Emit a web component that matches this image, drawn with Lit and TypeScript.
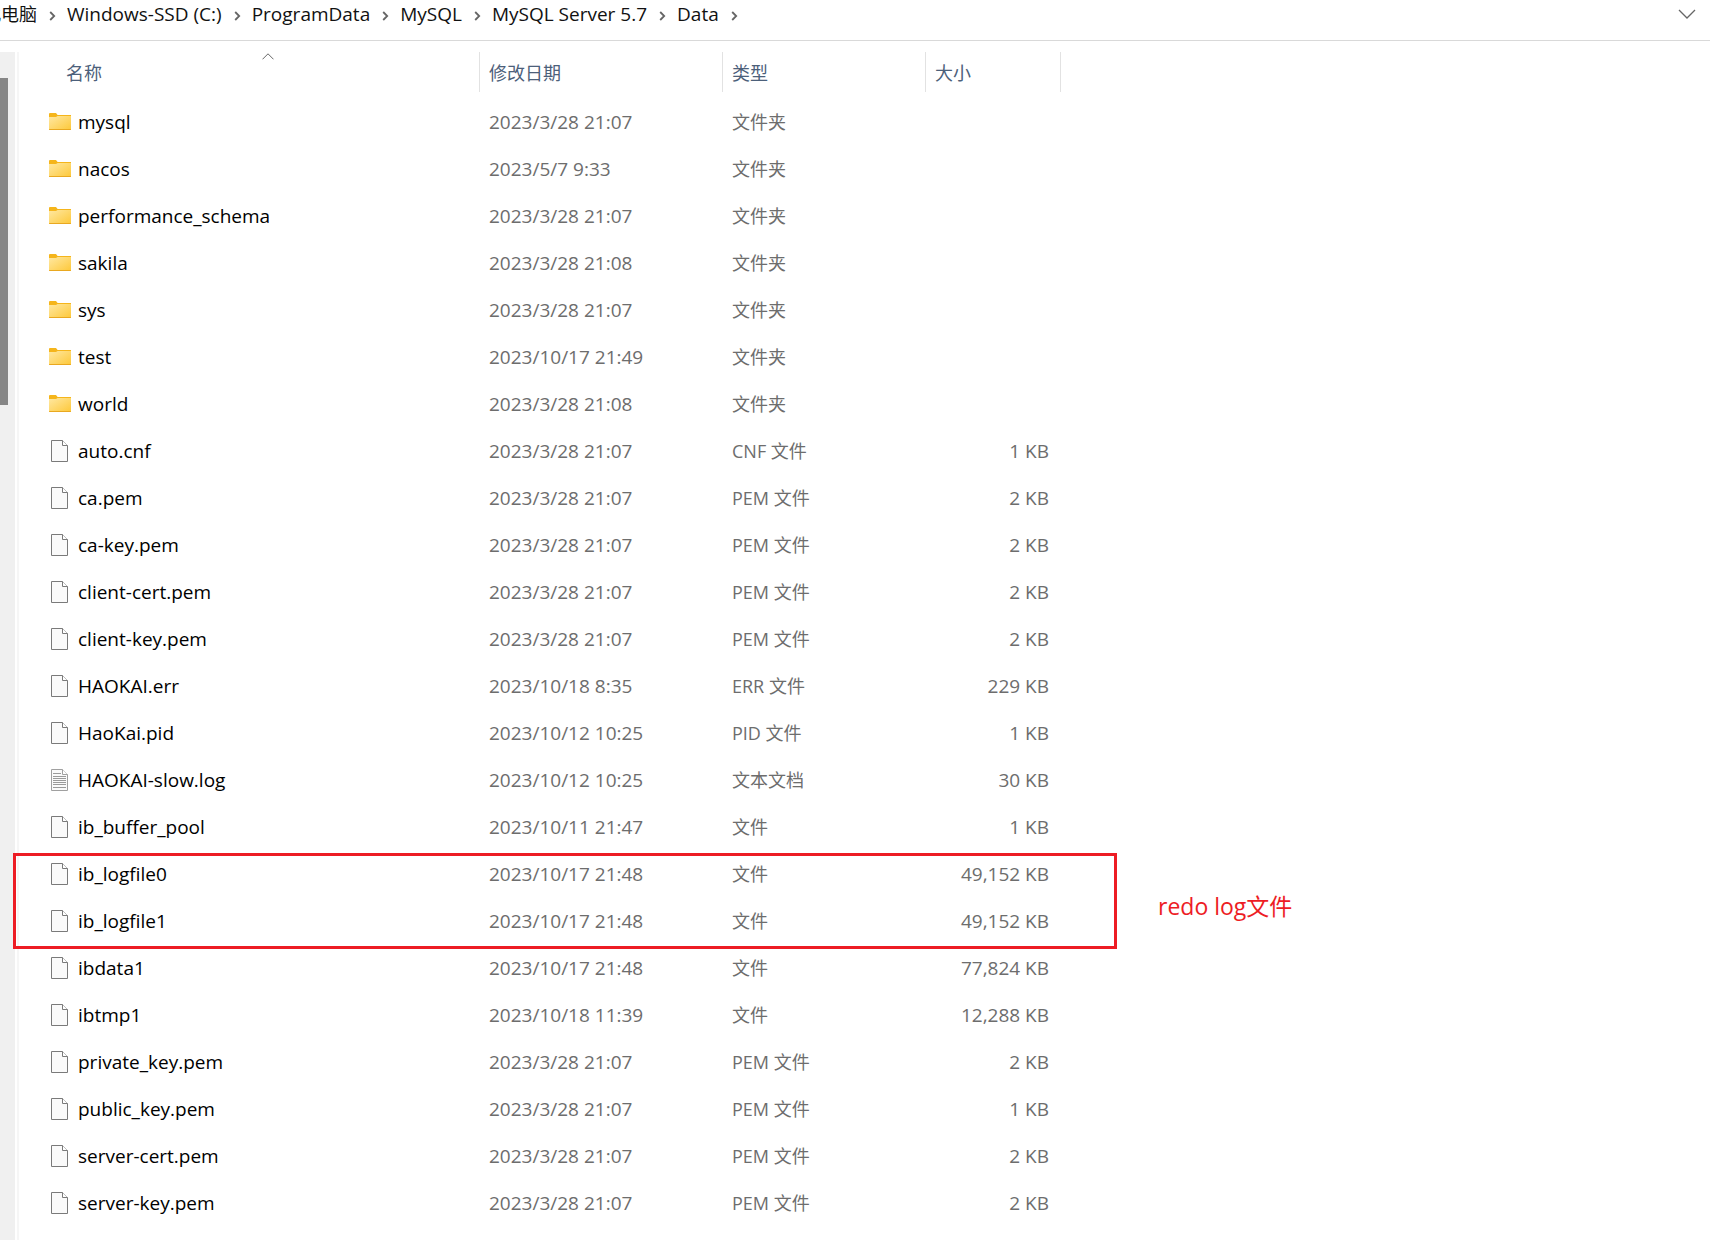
import { LitElement, html, css, svg, nothing } from "lit";
import { customElement } from "lit/decorators.js";

type Kind = "folder" | "file" | "text";

interface Entry {
  name: string;
  modified: string;
  type: string;
  size: string;
  kind: Kind;
}

const folder = (name: string, modified: string): Entry => ({
  name,
  modified,
  type: "文件夹",
  size: "",
  kind: "folder",
});

const file = (
  name: string,
  modified: string,
  type: string,
  size: string,
  kind: Kind = "file",
): Entry => ({ name, modified, type, size, kind });

const ENTRIES: Entry[] = [
  folder("mysql", "2023/3/28 21:07"),
  folder("nacos", "2023/5/7 9:33"),
  folder("performance_schema", "2023/3/28 21:07"),
  folder("sakila", "2023/3/28 21:08"),
  folder("sys", "2023/3/28 21:07"),
  folder("test", "2023/10/17 21:49"),
  folder("world", "2023/3/28 21:08"),
  file("auto.cnf", "2023/3/28 21:07", "CNF 文件", "1 KB"),
  file("ca.pem", "2023/3/28 21:07", "PEM 文件", "2 KB"),
  file("ca-key.pem", "2023/3/28 21:07", "PEM 文件", "2 KB"),
  file("client-cert.pem", "2023/3/28 21:07", "PEM 文件", "2 KB"),
  file("client-key.pem", "2023/3/28 21:07", "PEM 文件", "2 KB"),
  file("HAOKAI.err", "2023/10/18 8:35", "ERR 文件", "229 KB"),
  file("HaoKai.pid", "2023/10/12 10:25", "PID 文件", "1 KB"),
  file("HAOKAI-slow.log", "2023/10/12 10:25", "文本文档", "30 KB", "text"),
  file("ib_buffer_pool", "2023/10/11 21:47", "文件", "1 KB"),
  file("ib_logfile0", "2023/10/17 21:48", "文件", "49,152 KB"),
  file("ib_logfile1", "2023/10/17 21:48", "文件", "49,152 KB"),
  file("ibdata1", "2023/10/17 21:48", "文件", "77,824 KB"),
  file("ibtmp1", "2023/10/18 11:39", "文件", "12,288 KB"),
  file("private_key.pem", "2023/3/28 21:07", "PEM 文件", "2 KB"),
  file("public_key.pem", "2023/3/28 21:07", "PEM 文件", "1 KB"),
  file("server-cert.pem", "2023/3/28 21:07", "PEM 文件", "2 KB"),
  file("server-key.pem", "2023/3/28 21:07", "PEM 文件", "2 KB"),
];

const CRUMBS = [
  "此电脑",
  "Windows-SSD (C:)",
  "ProgramData",
  "MySQL",
  "MySQL Server 5.7",
  "Data",
];

@customElement("entry-icon")
class EntryIcon extends LitElement {
  static properties = { kind: { type: String } };
  declare kind: Kind;

  static styles = css`
    :host {
      display: block;
      flex: none;
      width: 22px;
      height: 22px;
    }
    svg {
      display: block;
    }
  `;

  render() {
    if (this.kind === "folder") {
      return html`<svg width="22" height="22" viewBox="0 0 22 22" aria-hidden="true">
        <defs>
          <linearGradient id="body" x1="0" y1="0" x2="1" y2="1">
            <stop offset="0" stop-color="#ffe8a2" />
            <stop offset="1" stop-color="#fdc839" />
          </linearGradient>
        </defs>
        <path d="M0 4V3a1 1 0 0 1 1-1h6l1.6 2H22v3H0z" fill="#f5b51b" />
        <path d="M0 6h7l1.6-1H22v14H0z" fill="url(#body)" />
        <path d="M0 18h22v.3a.7.7 0 0 1-.7.7H.7a.7.7 0 0 1-.7-.7z" fill="#e9a820" />
      </svg>`;
    }
    const text = this.kind === "text";
    return html`<svg width="22" height="22" viewBox="0 0 22 22" aria-hidden="true">
      <path
        d="M2.5 .5h11l5 5v16h-16z"
        fill="#fafafa"
        stroke=${text ? "#a0a0a0" : "#7a7a7a"}
      />
      <path
        d="M13.500 .5v5h5"
        fill="#fff"
        stroke=${text ? "#a0a0a0" : "#7a7a7a"}
      />
      ${text
        ? svg`<path d="M4 4.500h8M4 7.500h13M4 9.500h13M4 11.500h13M4 13.500h13M4 15.500h13M4 18.500h13" stroke="#9a9a9a" fill="none" />`
        : nothing}
    </svg>`;
  }
}

@customElement("path-bar")
class PathBar extends LitElement {
  static styles = css`
    :host {
      display: flex;
      align-items: flex-start;
      justify-content: space-between;
      height: 40px;
      border-bottom: 1px solid #d9d9d9;
      overflow: hidden;
    }
    .crumbs {
      display: flex;
      margin: 0 0 0 -17px;
      padding: 0;
      list-style: none;
      white-space: nowrap;
    }
    .crumb {
      display: flex;
      align-items: center;
      height: 28px;
    }
    .crumb:first-child {
      font-size: 18px;
    }
    .link {
      color: #111;
      text-decoration: none;
    }
    .arrow {
      margin: 3px 11px 0 12px;
    }
    .expand {
      display: flex;
      margin: 0 6px 0 0;
      padding: 9px 8px;
      border: 0;
      background: none;
    }
  `;

  render() {
    return html`
      <nav aria-label="路径">
        <ol class="crumbs">
          ${CRUMBS.map(
            (crumb) => html`<li class="crumb">
              <a class="link" href="#">${crumb}</a>
              <svg class="arrow" width="7" height="10" viewBox="0 0 7 10" aria-hidden="true">
                <path d="M1.200 1l4 4-4 4" fill="none" stroke="#666" stroke-width="1.800" />
              </svg>
            </li>`,
          )}
        </ol>
      </nav>
      <button class="expand" aria-label="展开">
        <svg width="18" height="10" viewBox="0 0 18 10" aria-hidden="true">
          <path d="M1 1l8 8 8-8" fill="none" stroke="#666" stroke-width="1.300" />
        </svg>
      </button>
    `;
  }
}

@customElement("file-list")
class FileList extends LitElement {
  static styles = css`
    :host {
      display: block;
      position: relative;
    }
    .table {
      width: 1042px;
      table-layout: fixed;
      border-collapse: separate;
      border-spacing: 0;
    }
    .col-name {
      width: 461px;
    }
    .col-date {
      width: 243px;
    }
    .col-type {
      width: 203px;
    }
    .col-size {
      width: 135px;
    }
    .head,
    .cell {
      height: 47px;
      padding: 0;
      text-align: left;
      font-weight: 400;
      white-space: nowrap;
    }
    .head {
      height: 46px;
      vertical-align: top;
    }
    .sort {
      position: relative;
      display: block;
      width: 100%;
      height: 40px;
      padding: 1px 0 0 9px;
      border: 0;
      border-right: 1px solid #e2e2e2;
      background: none;
      color: #4c607a;
      font: inherit;
      font-size: 18px;
      text-align: left;
    }
    .head:first-child .sort {
      padding-left: 47px;
    }
    .sort .caret {
      position: absolute;
      top: 1px;
      left: calc(50% + 13px);
    }
    .cell {
      padding-left: 9px;
      color: #6d6d6d;
    }
    .cell.name {
      padding-left: 30px;
      color: #000;
    }
    .cell.type {
      font-size: 18px;
    }
    .cell.size {
      padding: 0 12px 0 0;
      text-align: right;
    }
    .entry {
      display: flex;
      align-items: center;
      gap: 7px;
    }
    .mark {
      position: absolute;
      top: 801px;
      left: -6px;
      display: flex;
      align-items: center;
      gap: 41px;
      color: #ed1c24;
      font-size: 23px;
      white-space: nowrap;
      pointer-events: none;
    }
    .note {
      padding-top: 10px;
    }
    .frame {
      box-sizing: border-box;
      width: 1104px;
      height: 96px;
      border: 3px solid #ed1c24;
    }
  `;

  render() {
    return html`
      <table class="table">
        <colgroup>
          <col class="col-name" />
          <col class="col-date" />
          <col class="col-type" />
          <col class="col-size" />
        </colgroup>
        <thead>
          <tr>
            <th class="head" scope="col" aria-sort="ascending">
              <button class="sort">
                名称
                <svg class="caret" width="12" height="7" viewBox="0 0 12 7" aria-hidden="true">
                  <path d="M.5 6.300L6 .8l5.500 5.500" fill="none" stroke="#666" />
                </svg>
              </button>
            </th>
            <th class="head" scope="col"><button class="sort">修改日期</button></th>
            <th class="head" scope="col"><button class="sort">类型</button></th>
            <th class="head" scope="col"><button class="sort">大小</button></th>
          </tr>
        </thead>
        <tbody>
          ${ENTRIES.map(
            (e) => html`<tr>
              <td class="cell name">
                <div class="entry">
                  <entry-icon .kind=${e.kind}></entry-icon>
                  <span>${e.name}</span>
                </div>
              </td>
              <td class="cell">${e.modified}</td>
              <td class="cell type">${e.type}</td>
              <td class="cell size">${e.size}</td>
            </tr>`,
          )}
        </tbody>
      </table>
      <div class="mark">
        <div class="frame"></div>
        <span class="note">redo log文件</span>
      </div>
    `;
  }
}

@customElement("app-root")
class AppRoot extends LitElement {
  static styles = css`
    :host {
      display: flex;
      flex-direction: column;
      min-height: 100vh;
      background: #fff;
      color: #000;
      font-family: "Open Sans", "Noto Sans CJK SC", sans-serif;
      font-size: 19px;
      line-height: 24px;
    }
    .body {
      display: flex;
      flex: 1;
      padding-top: 11px;
    }
    .rail {
      display: grid;
      grid-template-rows: 26px 9fr 23fr;
      flex: none;
      width: 15px;
      background: #f0f0f0;
    }
    .thumb {
      grid-row: 2;
      width: 8px;
      background: #868686;
    }
    .main {
      flex: 1;
      margin-left: 2px;
      border-left: 2px solid #f6f6f6;
    }
  `;

  render() {
    return html`
      <path-bar></path-bar>
      <div class="body">
        <div class="rail"><div class="thumb"></div></div>
        <main class="main"><file-list></file-list></main>
      </div>
    `;
  }
}
